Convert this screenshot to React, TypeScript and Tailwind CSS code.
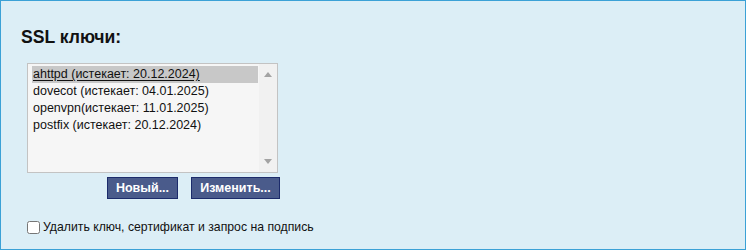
import React from "react";

const items = [
  "ahttpd (истекает: 20.12.2024)",
  "dovecot (истекает: 04.01.2025)",
  "openvpn(истекает: 11.01.2025)",
  "postfix (истекает: 20.12.2024)",
];

export default function App() {
  return (
    <div
      className="w-[746px] h-[250px] border border-[#3ba1d6] bg-[#dceef6] text-[#111] pt-[26px] pl-[20px]"
      style={{ fontFamily: '"Liberation Sans", Arial, sans-serif' }}
    >
      <div className="text-[17.6px] leading-[21px] font-bold">SSL ключи:</div>
      <div className="ml-[6px] mt-[15px] w-[251px] h-[110px] border border-[#c3c3c3] bg-[#f6f6f6] flex">
        <div className="flex-1 pt-[2px] pl-[4px] pr-[1px]">
          {items.map((t, i) => (
            <div
              key={i}
              className={`h-[17px] leading-[17px] text-[12.5px] pl-[1px] whitespace-nowrap ${
                i === 0 ? "bg-[#c8c8c8]" : ""
              }`}
            >
              <span className={i === 0 ? "underline underline-offset-[2px]" : ""}>{t}</span>
            </div>
          ))}
        </div>
        <div className="w-[18px] bg-[#f1f1f1] flex flex-col items-center justify-between py-[8px]">
          <svg width="8" height="5" viewBox="0 0 8 5">
            <polygon points="4,0 8,5 0,5" fill="#a3a3a3" />
          </svg>
          <svg width="8" height="5" viewBox="0 0 8 5">
            <polygon points="0,0 8,0 4,5" fill="#a3a3a3" />
          </svg>
        </div>
      </div>
      <div className="flex gap-[13px] mt-[4px] ml-[86px]">
        <button className="w-[71px] h-[22px] bg-[#4a5b8b] border border-[#1c2b6b] text-white font-bold text-[12.5px] leading-none">
          Новый...
        </button>
        <button className="w-[89px] h-[22px] bg-[#4a5b8b] border border-[#1c2b6b] text-white font-bold text-[12.5px] leading-none">
          Изменить...
        </button>
      </div>
      <label className="flex items-center mt-[20px] ml-[6px] h-[17px] text-[12.25px]">
        <input type="checkbox" className="w-[13px] h-[13px] mr-[3px]" />
        <span>Удалить ключ, сертификат и запрос на подпись</span>
      </label>
    </div>
  );
}
